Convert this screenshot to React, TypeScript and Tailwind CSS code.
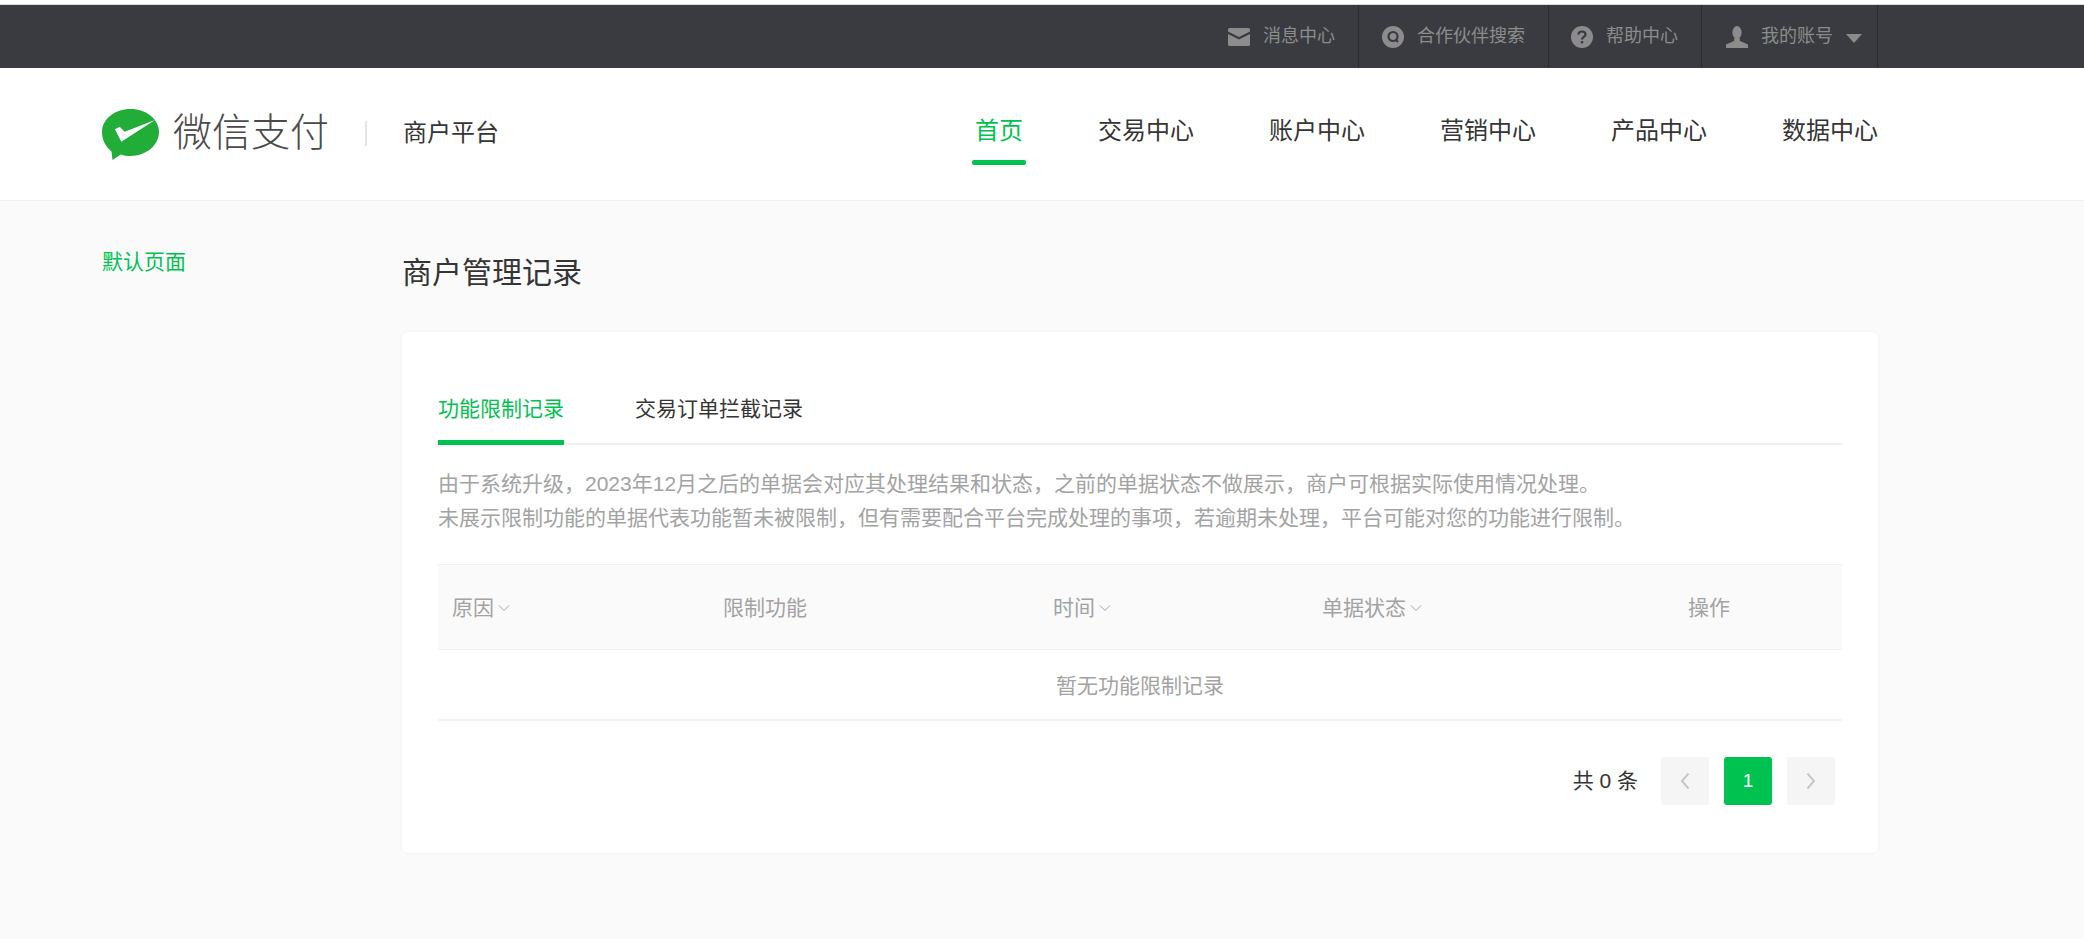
const FONT = "font-['Liberation_Sans','Microsoft_YaHei','Noto_Sans_CJK_SC',sans-serif]";

const navItems = ["首页", "交易中心", "账户中心", "营销中心", "产品中心", "数据中心"];

const MailIcon = () => (
  <svg width="22" height="18" viewBox="0 0 22 18" fill="#8c8c8c">
    <path d="M0 1.5 Q0 0 1.5 0 H20.5 Q22 0 22 1.5 V3.5 L11 9 L0 3.5 Z" />
    <path d="M0 6 L11 11.5 L22 6 V16.5 Q22 18 20.5 18 H1.5 Q0 18 0 16.5 Z" />
  </svg>
);

const SearchIcon = () => (
  <svg width="22" height="22" viewBox="0 0 22 22">
    <circle cx="11" cy="11" r="11" fill="#8c8c8c" />
    <circle cx="11" cy="10.5" r="4.5" fill="none" stroke="#3a3b40" strokeWidth="2.2" />
    <path d="M13.5 13.5 L16 16" stroke="#3a3b40" strokeWidth="2" />
  </svg>
);

const HelpIcon = () => (
  <svg width="22" height="22" viewBox="0 0 22 22">
    <circle cx="11" cy="11" r="11" fill="#8c8c8c" />
    <path d="M7.5 8.5 C7.5 4.5 14.5 4.5 14.5 8.5 C14.5 11 11 10.8 11 13.5" fill="none" stroke="#3a3b40" strokeWidth="2.2" />
    <rect x="9.8" y="15" width="2.4" height="2.4" fill="#3a3b40" />
  </svg>
);

const UserIcon = () => (
  <svg width="22" height="22" viewBox="0 0 22 22" fill="#8c8c8c">
    <ellipse cx="11" cy="6.5" rx="4.6" ry="6.5" />
    <path d="M8.5 12 H13.5 L14 15 L22 18.5 V22 H0 V18.5 L8 15 Z" />
  </svg>
);

const WechatLogo = () => (
  <svg width="57" height="51" viewBox="0 0 57 51">
    <path
      d="M28.5 0 C44.2 0 57 10 57 23 C57 36 44.2 47 28.5 47 C25 47 21.8 46.4 18.8 45.4 L10.5 51 L9.5 42.4 C3.6 37.8 0 30.9 0 23 C0 10 12.8 0 28.5 0 Z"
      fill="#22ac38"
    />
    <path d="M13 20.3 L17.7 17.7 L22.7 22.7 L53 11 L19.3 32.7 Z" fill="#fff" />
  </svg>
);

const SortArrow = () => (
  <svg className="ml-[4px]" width="12" height="8" viewBox="0 0 12 8" fill="none" stroke="#a3a3a3" strokeWidth="1">
    <path d="M1 1.5 L6 6.5 L11 1.5" />
  </svg>
);

const TopLink = ({ icon, label, width, children }: { icon: React.ReactNode; label: string; width: string; children?: React.ReactNode }) => (
  <div className={`flex h-full items-center justify-end gap-[13px] border-r border-[#2b2c30] ${width}`}>
    {icon}
    <span className="pb-[2px] text-[18px] leading-none text-[#8c8c8c]">{label}</span>
    {children}
  </div>
);

export default function App() {
  return (
    <div className={`flex min-h-[939px] flex-col bg-[#fafafa] ${FONT}`}>
      <div className="h-[5px] border-b border-[#d9d9d9] bg-white" />
      <div className="h-[63px] bg-[#3a3b40]">
        <div className="ml-[102px] mr-[206px] flex h-full justify-end">
          <TopLink icon={<MailIcon />} label="消息中心" width="w-[170px] pr-[23px]" />
          <TopLink icon={<SearchIcon />} label="合作伙伴搜索" width="w-[190px] pr-[23px]" />
          <TopLink icon={<HelpIcon />} label="帮助中心" width="w-[153px] pr-[23px]" />
          <TopLink icon={<UserIcon />} label="我的账号" width="w-[176px] pr-[15px]">
            <span className="mt-[4px] h-0 w-0 border-x-[8px] border-t-[9px] border-x-transparent border-t-[#8c8c8c]" />
          </TopLink>
        </div>
      </div>

      <header className="h-[133px] border-b border-[#f0f0f0] bg-white">
        <div className="ml-[102px] mr-[206px] flex h-full">
          <div className="flex h-full items-start pt-[41px]">
            <WechatLogo />
            <span className="ml-[14px] text-[39px] font-light leading-[48px] text-[#4a4a4a]">微信支付</span>
            <span className="ml-[36px] mt-[12px] h-[25px] w-[2px] bg-[#e5e5e5]" />
            <span className="ml-[36px] mt-[8px] text-[24px] leading-[32px] text-[#353535]">商户平台</span>
          </div>
          <nav className="ml-auto flex h-full gap-[75px]">
            {navItems.map((item, i) => (
              <div key={item} className="relative pt-[47px]">
                <span className={`text-[24px] leading-[32px] ${i === 0 ? "text-[#00c250]" : "text-[#353535]"}`}>{item}</span>
                {i === 0 && <span className="absolute left-[-3px] right-[-3px] top-[92px] h-[5px] rounded-[2px] bg-[#00c250]" />}
              </div>
            ))}
          </nav>
        </div>
      </header>

      <div className="ml-[102px] mr-[206px] flex flex-1">
        <aside className="w-[300px] pt-[46px]">
          <a className="text-[21px] leading-[30px] text-[#00c250]">默认页面</a>
        </aside>
        <main className="flex-1">
          <h1 className="mt-[52px] text-[30px] font-normal leading-[40px] text-[#353535]">商户管理记录</h1>
          <section className="mt-[39px] rounded-[6px] bg-white px-[36px] pb-[48px] pt-[58px] shadow-[0_0_3px_rgba(0,0,0,0.05)]">
            <div className="flex h-[55px] gap-[71px] border-b-2 border-[#f0f0f0]">
              <div className="h-[55px] border-b-[5px] border-[#00c250] text-[21px] leading-[38px] text-[#00c250]">功能限制记录</div>
              <div className="text-[21px] leading-[38px] text-[#353535]">交易订单拦截记录</div>
            </div>
            <p className="mt-[22px] text-[21px] leading-[34px] text-[#a3a3a3]">
              由于系统升级，2023年12月之后的单据会对应其处理结果和状态，之前的单据状态不做展示，商户可根据实际使用情况处理。
              <br />
              未展示限制功能的单据代表功能暂未被限制，但有需要配合平台完成处理的事项，若逾期未处理，平台可能对您的功能进行限制。
            </p>

            <div className="mt-[29px] grid h-[86px] grid-cols-[271px_330px_269px_366px_1fr] items-center border-y border-[#f0f0f0] bg-[#fafafa] pl-[14px] pt-[2px] text-[21px] text-[#a3a3a3]">
              <div className="flex items-center">原因<SortArrow /></div>
              <div>限制功能</div>
              <div className="flex items-center">时间<SortArrow /></div>
              <div className="flex items-center">单据状态<SortArrow /></div>
              <div>操作</div>
            </div>
            <div className="flex h-[71px] items-center justify-center border-b-2 border-[#f0f0f0] pt-[2px] text-[21px] text-[#a3a3a3]">暂无功能限制记录</div>

            <div className="mt-[36px] flex items-center justify-end gap-[15px] pr-[7px]">
              <span className="mr-[8px] text-[21px] text-[#353535]">共 0 条</span>
              <button className="flex h-[48px] w-[48px] items-center justify-center rounded-[3px] bg-[#f5f5f5]">
                <svg width="10" height="18" viewBox="0 0 10 18" fill="none" stroke="#c8c8c8" strokeWidth="2"><path d="M8.5 1.5 L2 9 L8.5 16.5" /></svg>
              </button>
              <button className="h-[48px] w-[48px] rounded-[3px] bg-[#00c250] text-[19px] text-white">1</button>
              <button className="flex h-[48px] w-[48px] items-center justify-center rounded-[3px] bg-[#f5f5f5]">
                <svg width="10" height="18" viewBox="0 0 10 18" fill="none" stroke="#c8c8c8" strokeWidth="2"><path d="M1.5 1.5 L8 9 L1.5 16.5" /></svg>
              </button>
            </div>
          </section>
        </main>
      </div>
    </div>
  );
}
